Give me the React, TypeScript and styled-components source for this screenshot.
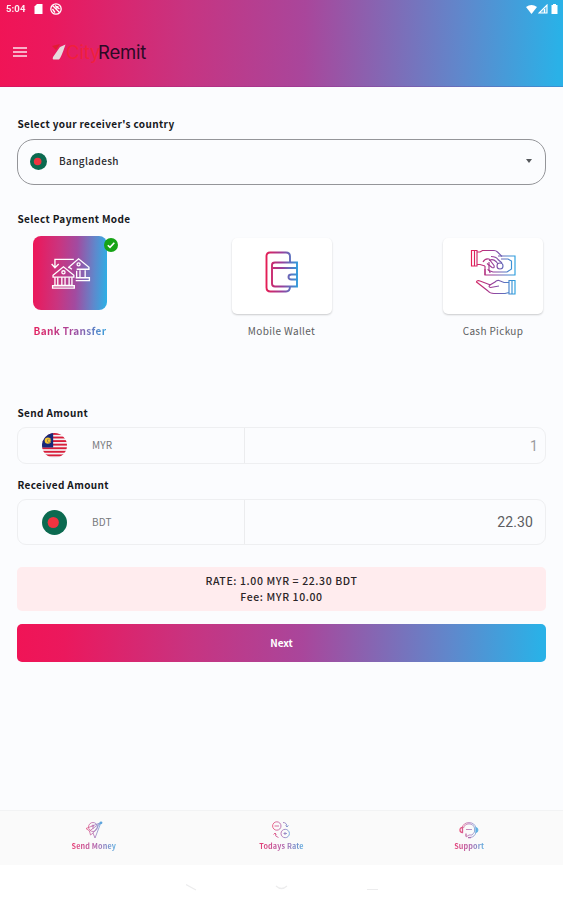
import React from "react";
import styled, { createGlobalStyle, css } from "styled-components";

const Global = createGlobalStyle`
  * { box-sizing: border-box; }
  body { margin: 0; background: #fbfcfe; font-family: "Noto Sans CJK SC", "Noto Sans", sans-serif; }
`;

const brand = "linear-gradient(92deg, #f01456 0%, #eb185d 9%, #c73481 33%, #a9469b 54%, #5f88cc 82%, #2ab1e7 99%)";
const tint = "linear-gradient(90deg, #e3205f, #a9469b 52%, #3a9fdb)";

const Screen = styled.div`
  width: 100%;
  height: 900px;
  display: flex;
  flex-direction: column;
  background: #fbfcfe;
  overflow: hidden;
`;
const Header = styled.header`
  height: 87px;
  flex: none;
  background: ${brand};
  border-bottom: 1px solid rgba(120, 20, 130, 0.2);
`;
const StatusBar = styled.div`
  height: 18px;
  display: flex;
  align-items: center;
  padding: 0 5px 0 6px;
  color: #fff;
`;
const Clock = styled.span`
  font: 700 9.5px/18px Roboto, sans-serif;
  letter-spacing: 0.1px;
  width: 27px;
  opacity: 0.92;
`;
const StatusGlyph = styled.svg<{ $gap?: number }>`
  display: block;
  margin-left: ${(p) => p.$gap ?? 0}px;
`;
const Spacer = styled.div`
  flex: 1;
`;
const AppBar = styled.div`
  height: 68px;
  display: flex;
  align-items: center;
  padding: 0 0 0 13px;
`;
const MenuIcon = styled.svg`
  margin-right: 25px;
`;
const LogoText = styled.span<{ $dark?: boolean }>`
  font: 400 18.5px/22px Inter, sans-serif;
  letter-spacing: ${(p) => (p.$dark ? "-0.2px" : "-0.1px")};
  color: ${(p) => (p.$dark ? "#2b0a26" : "#f0203c")};
  width: ${(p) => (p.$dark ? 50 : 32)}px;
`;
const Content = styled.main`
  flex: 1;
  display: flex;
  flex-direction: column;
  padding: 0 17px;
`;
const Label = styled.div<{ $top: number }>`
  margin-top: ${(p) => p.$top}px;
  height: 16px;
  font-size: 10px;
  font-weight: 700;
  line-height: 16px;
  letter-spacing: 0.37px;
  padding-left: 0.5px;
  color: #16181b;
  white-space: nowrap;
`;
const CountrySelect = styled.div`
  margin-top: 7px;
  height: 46px;
  border: 1px solid #949599;
  border-radius: 17px;
  display: flex;
  align-items: center;
  padding: 0 12px 2px;
`;
const CountryName = styled.span`
  margin-left: 12px;
  font-size: 10px;
  line-height: 16px;
  font-weight: 500;
  letter-spacing: 0.38px;
  color: #2a2b2e;
`;
const Caret = styled.span`
  border: 3px solid transparent;
  border-top: 4px solid #55585c;
  border-bottom: 0;
  margin-right: 1px;
`;
const Modes = styled.div`
  display: flex;
  justify-content: space-between;
  margin: 9px -14px 0 3px;
  width: 523px;
`;
const Mode = styled.div`
  width: 100px;
  display: flex;
  flex-direction: column;
  align-items: center;
`;
const card = css`
  width: 100px;
  height: 76px;
  margin-top: 2px;
  padding-bottom: 9px;
  background: #fff;
  border-radius: 5px;
  box-shadow: 0 1px 2px rgba(0, 0, 0, 0.2);
`;
const selectedCard = css`
  width: 74px;
  height: 74px;
  margin-bottom: 4px;
  padding-left: 1px;
  background: linear-gradient(92deg, #ee1658 0%, #c93580 35%, #a24ba0 58%, #5f88cc 82%, #2ab1e7 100%);
  border-radius: 8px;
`;
const Tile = styled.div<{ $selected?: boolean }>`
  position: relative;
  display: flex;
  align-items: center;
  justify-content: center;
  ${(p) => (p.$selected ? selectedCard : card)}
`;
const Check = styled.svg`
  position: absolute;
  top: 2px;
  right: -11px;
`;
const ModeName = styled.div<{ $selected?: boolean }>`
  margin-top: 9px;
  height: 16px;
  font-size: 10px;
  line-height: 16px;
  letter-spacing: 0.35px;
  white-space: nowrap;
  ${(p) =>
    p.$selected
      ? css`
          font-weight: 700;
          color: transparent;
          background: ${tint};
          background-clip: text;
          -webkit-background-clip: text;
        `
      : css`
          color: #5d5e61;
        `}
`;
const AmountBox = styled.div<{ $height: number; $top: number }>`
  margin-top: ${(p) => p.$top}px;
  height: ${(p) => p.$height}px;
  display: grid;
  grid-template-columns: 227px 1fr;
  border: 1px solid #eeeff1;
  border-radius: 9px;
`;
const Currency = styled.div`
  display: flex;
  align-items: center;
  gap: 25px;
  padding-left: 24px;
  border-right: 1px solid #ebecee;
  font-size: 10px;
  color: #77797c;
`;
const Code = styled.span`
  line-height: 14px;
  padding-bottom: 1px;
  letter-spacing: 0.1px;
`;
const Amount = styled.div<{ $muted?: boolean }>`
  display: flex;
  align-items: center;
  justify-content: flex-end;
  padding-right: ${(p) => (p.$muted ? 7 : 12)}px;
  font: 400 14px/18px Roboto, sans-serif;
  letter-spacing: 0.1px;
  color: ${(p) => (p.$muted ? "#9a9b9e" : "#5c5d61")};
`;
const RateBox = styled.div`
  margin-top: 22px;
  height: 44px;
  border-radius: 5px;
  background: #ffecee;
  padding-top: 6px;
  text-align: center;
  font-size: 10.5px;
  font-weight: 500;
  line-height: 16px;
  letter-spacing: 0.6px;
  color: #2b2527;
`;
const NextButton = styled.button`
  margin-top: 13px;
  height: 38px;
  border: 0;
  border-radius: 5px;
  background: ${brand};
  color: #fff;
  padding: 0 0 1px;
  font: 700 10px/16px "Noto Sans CJK SC", sans-serif;
`;
const TabBar = styled.nav`
  height: 55px;
  flex: none;
  display: grid;
  grid-template-columns: repeat(3, 1fr);
  background: #fafafa;
  border-top: 1px solid #f2f3f4;
`;
const Tab = styled.div`
  display: flex;
  flex-direction: column;
  align-items: center;
  padding-top: 9px;
`;
const TabIcon = styled.div`
  height: 18px;
  opacity: 0.75;
`;
const TabName = styled.span`
  font-size: 7.2px;
  font-weight: 700;
  line-height: 12px;
  margin-top: 2px;
  letter-spacing: 0.15px;
  color: transparent;
  background: ${tint};
  background-clip: text;
  -webkit-background-clip: text;
  opacity: 0.85;
`;
const SystemNav = styled.div`
  height: 35px;
  flex: none;
  background: #fff;
  display: flex;
  justify-content: center;
  padding-top: 18px;
`;

const Grad = ({ id, w }: { id: string; w: number }) => (
  <defs>
    <linearGradient id={id} gradientUnits="userSpaceOnUse" x1="0" y1="0" x2={w} y2="0">
      <stop offset="0" stopColor="#ea1b50" />
      <stop offset="0.5" stopColor="#983f9b" />
      <stop offset="1" stopColor="#25a4e2" />
    </linearGradient>
  </defs>
);

const BangladeshFlag = ({ size }: { size: number }) => (
  <svg width={size} height={size} viewBox="0 0 24 24">
    <circle cx="12" cy="12" r="12" fill="#0b6a50" />
    <circle cx="10.8" cy="12" r="5.4" fill="#ef3340" />
  </svg>
);

const MalaysiaFlag = () => (
  <svg width="25" height="25" viewBox="0 0 28 28">
    <clipPath id="my"><circle cx="14" cy="14" r="14" /></clipPath>
    <g clipPath="url(#my)">
      <rect width="28" height="28" fill="#f4f2f5" />
      {[0, 4, 8, 12, 16, 20, 24].map((y) => (
        <rect key={y} y={y} width="28" height="2.1" fill="#d81e3a" />
      ))}
      <rect width="12.5" height="16.2" fill="#17297a" />
      <circle cx="6.6" cy="8.5" r="3.6" fill="#f5c634" />
      <circle cx="8" cy="8.5" r="2.2" fill="#4a4a60" />
      <circle cx="8" cy="8.5" r="1.7" fill="#f5c634" />
    </g>
  </svg>
);

const BankIcon = () => (
  <svg width="40" height="34" viewBox="0 0 42 36" fill="none" stroke="#fff" strokeWidth="1.4">
    <path d="M24 3.5H4V12M0.500 8.500l3.500 4 4-4" />
    <path d="M18 12.5 29 3l11 9v2H27M22 14l-3-2" />
    <circle cx="29" cy="8.8" r="1.6" />
    <path d="M27 15.5v7M30.500 15v8M36 15v8M26 23h14.500v3H26" />
    <path d="M2 20.5 13 11.5l11 9v1.8H2Z" />
    <circle cx="13" cy="17.3" r="1.7" />
    <path d="M4 22.5V31M7 22.5V31M11.3 22.5V31M14.7 22.5V31M19 22.5V31M22 22.5V31M3 31.2h20M1.500 34h23V31.500H1.500Z" />
  </svg>
);

const WalletIcon = () => (
  <svg width="34" height="42" viewBox="0 0 34 42" fill="none" stroke="url(#wg)" strokeWidth="1.9">
    <Grad id="wg" w={34} />
    <path d="M25 12V5.500Q25 1.500 21 1.500H5Q1.500 1.500 1.500 5V36.500Q1.500 40.500 5.500 40.500H21Q25 40.500 25 35.500" />
    <path d="M7 14Q7 11.500 10 11.500H32V35.500H10Q7 35.500 7 32.500ZM8 17H32" />
    <path d="M32.500 23.500H26.500Q23.500 23.500 23.500 26Q23.500 28.500 26.500 28.500H32.500" />
  </svg>
);

const CashIcon = () => (
  <svg width="46" height="46" viewBox="0 0 46 46" fill="none" stroke="url(#cg)" strokeWidth="1.15">
    <Grad id="cg" w={46} />
    <path d="M1.500 1.500H7V17H1.500ZM4.500 2V17M7 3H10L12.500 1.500H24Q26 1.500 27.500 3L32 7.500M7 15.500H10L15 17" />
    <path d="M15 17V26H45V7H28M19 13V21.500L23 23H37L41.500 20V12L38 10H31" />
    <path d="M19 11.500Q23 9.500 26 12.500L28 15M13 13Q15 9 19 10L24 16.500Q25 19.500 22 18.500L17 14.500M21 7.500Q26 7.500 28 10.500L32 14" />
    <circle cx="30" cy="17" r="3" />
    <path d="M15 26V20M17.500 20.500Q20 21 20 24" />
    <path d="M45 31.500H39V45H45ZM42 32V45M39 33.500H34L29 31.500Q27 31 25 33L20 36Q18 38 20.500 38.500L29 37M20.500 36L10 32Q7 31 6.500 33L18 42Q20 44.500 24 44.500H35L39 43.500" />
  </svg>
);

const SendIcon = () => (
  <svg width="18" height="18" viewBox="0 0 18 18" fill="none" stroke="url(#sg)" strokeWidth="0.8">
    <Grad id="sg" w={18} />
    <circle cx="8" cy="6" r="4.500" />
    <path d="M8 3.500V8M6.500 5H9M16 1.500 1 7.500 4.500 10 5.500 14 8 12 10 17 16 1.500 4.500 10M8 12 16 1.500" />
    <circle cx="16" cy="1.800" r="1.400" fill="#2888d4" stroke="none" />
  </svg>
);

const RateIcon = () => (
  <svg width="18" height="18" viewBox="0 0 18 18" fill="none" stroke="url(#rg)" strokeWidth="0.9">
    <Grad id="rg" w={20} />
    <circle cx="4.800" cy="5" r="4.200" />
    <circle cx="13.200" cy="12.500" r="4.200" />
    <path d="M2.500 5H7M11.500 12.500H15M13 11V14M11 1.500Q15 1.500 15 6M13.500 4.500 15 6 16.500 4.500M6.500 16.500Q3 16 3 12M1.500 13.500 3 12 4.500 13.500" />
  </svg>
);

const SupportIcon = () => (
  <svg width="20" height="18" viewBox="0 0 20 18" fill="none" stroke="url(#pg)" strokeWidth="0.8">
    <Grad id="pg" w={20} />
    <path d="M3 7A7.200 7 0 0 1 17 7M4.500 7A5.700 5.600 0 0 1 15.500 7V11L13 14H10L7 16M17 11Q16 16 11 16.500M7 8.500H13" />
    <path d="M3.500 6.500Q1 6.500 1 9T3.500 11.500ZM7 12.500V15.500" strokeWidth="1.300" />
    <path d="M16.800 6.500Q19 6.500 19 9T16.800 11.500Z" fill="#2b98db" stroke="#2b98db" />
    <path d="M9 16.600h3" strokeWidth="1.300" />
  </svg>
);

const tabs = [
  { name: "Send Money", icon: <SendIcon /> },
  { name: "Todays Rate", icon: <RateIcon /> },
  { name: "Support", icon: <SupportIcon /> },
];

export default function App() {
  return (
    <Screen>
      <Global />
      <Header>
        <StatusBar>
          <Clock>5:04</Clock>
          <StatusGlyph $gap={1} width="9" height="10" viewBox="0 0 9 10">
            <path d="M3 0H8.500V10H.5V2.500Z" fill="#fff" />
          </StatusGlyph>
          <StatusGlyph $gap={7} width="12" height="12" viewBox="0 0 12 12" fill="none" stroke="#fff" strokeWidth="1.300">
            <circle cx="6" cy="6" r="5.200" />
            <path d="M2.500 2.500 9.500 9.500M5 2.500 9.500 6M2.500 6 5 9.500M5.500 5.500 8.500 3.500" />
          </StatusGlyph>
          <Spacer />
          <StatusGlyph width="11" height="9" viewBox="0 0 11 9">
            <path d="M0 2Q5.500-1.800 11 2L5.500 9Z" fill="#fff" />
          </StatusGlyph>
          <StatusGlyph $gap={1} width="10" height="10" viewBox="0 0 10 10">
            <path d="M9 1V9H1ZM6.500 5V9" fill="rgba(255,255,255,.25)" stroke="#fff" strokeWidth="1.100" />
          </StatusGlyph>
          <StatusGlyph $gap={3} width="7" height="10" viewBox="0 0 7 10">
            <path d="M2 1V0H5V1H6.500V10H.5V1Z" fill="#fff" />
          </StatusGlyph>
        </StatusBar>
        <AppBar>
          <MenuIcon width="14" height="10" viewBox="0 0 14 10">
            <path d="M0 1H14M0 5H14M0 9H14" stroke="#fbe3ec" strokeWidth="1.500" />
          </MenuIcon>
          <svg width="14" height="16" viewBox="0 0 14 16">
            <path d="M0 2 8 0 4 6Z" fill="#e01c32" />
            <path d="M13.500 0.500 8 3 1 13Q0 16 2 15.500H7Q9 14 13.500 0.500Z" fill="#e6dadd" />
          </svg>
          <LogoText>City</LogoText>
          <LogoText $dark>Remit</LogoText>
        </AppBar>
      </Header>
      <Content>
        <Label $top={29}>Select your receiver's country</Label>
        <CountrySelect>
          <BangladeshFlag size={17} />
          <CountryName>Bangladesh</CountryName>
          <Spacer />
          <Caret />
        </CountrySelect>
        <Label $top={26}>Select Payment Mode</Label>
        <Modes>
          <Mode>
            <Tile $selected>
              <BankIcon />
              <Check width="14" height="14" viewBox="0 0 14 14">
                <circle cx="7" cy="7" r="7" fill="#16a316" />
                <path d="M3.800 7.200 6 9.400 10.300 4.800" fill="none" stroke="#fff" strokeWidth="1.600" />
              </Check>
            </Tile>
            <ModeName $selected>Bank Transfer</ModeName>
          </Mode>
          <Mode>
            <Tile><WalletIcon /></Tile>
            <ModeName>Mobile Wallet</ModeName>
          </Mode>
          <Mode>
            <Tile><CashIcon /></Tile>
            <ModeName>Cash Pickup</ModeName>
          </Mode>
        </Modes>
        <Label $top={66}>Send Amount</Label>
        <AmountBox $top={6} $height={37}>
          <Currency><MalaysiaFlag /><Code>MYR</Code></Currency>
          <Amount $muted>1</Amount>
        </AmountBox>
        <Label $top={13}>Received Amount</Label>
        <AmountBox $top={6} $height={46}>
          <Currency><BangladeshFlag size={25} /><Code>BDT</Code></Currency>
          <Amount>22.30</Amount>
        </AmountBox>
        <RateBox>
          <div>RATE: 1.00 MYR = 22.30 BDT</div>
          <div>Fee: MYR 10.00</div>
        </RateBox>
        <NextButton>Next</NextButton>
      </Content>
      <TabBar>
        {tabs.map((t) => (
          <Tab key={t.name}>
            <TabIcon>{t.icon}</TabIcon>
            <TabName>{t.name}</TabName>
          </Tab>
        ))}
      </TabBar>
      <SystemNav>
        <svg width="192" height="10" viewBox="0 0 192 10" fill="none" stroke="#ececed" strokeWidth="1.200">
          <path d="M0 1.500 10 7M90 3Q95.500 8 101 3M181 6.500H192" />
        </svg>
      </SystemNav>
    </Screen>
  );
}
